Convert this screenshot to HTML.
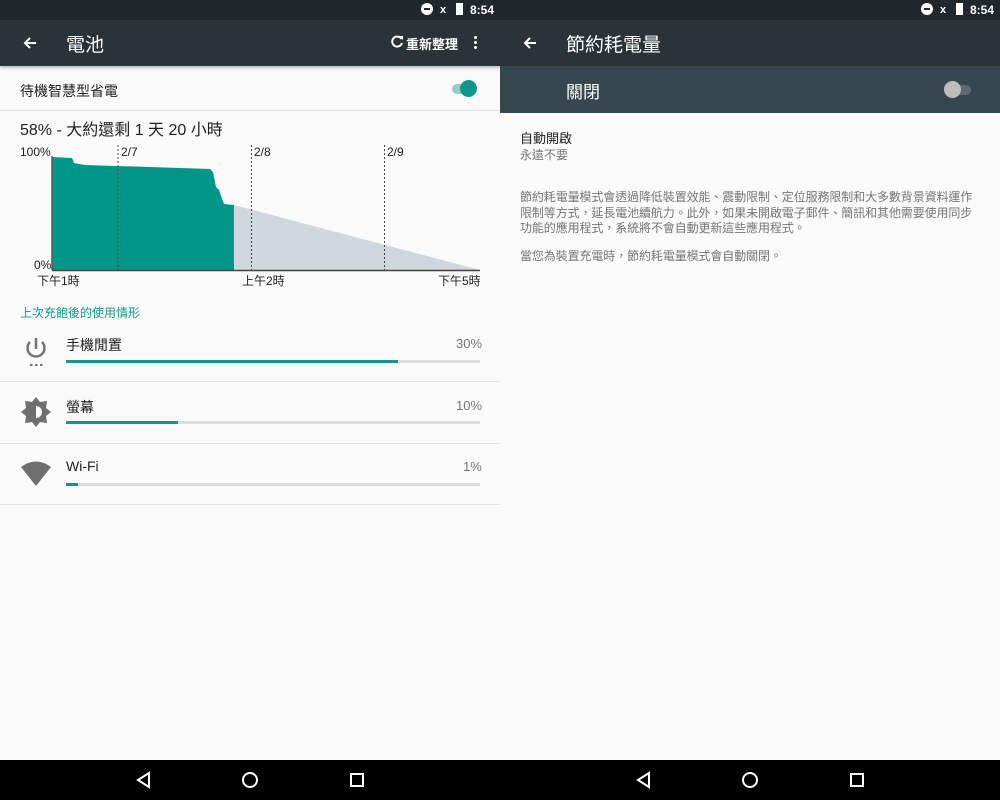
<!DOCTYPE html>
<html><head><meta charset="utf-8"><style>
*{margin:0;padding:0;box-sizing:border-box}
body{width:1000px;height:800px;background:#fafafa;font-family:"Liberation Sans","Noto Sans CJK TC",sans-serif;position:relative;overflow:hidden;color:#212121}
.a{position:absolute;white-space:nowrap}
.sb{top:0;height:20px;background:#21272b}
.tb{top:20px;height:46px;background:#2b3339}
.div{height:1px;background:#e3e3e3;position:absolute}
.bar{position:absolute;height:3px;background:#ddd}
.bar i{display:block;height:3px;background:#159688}
</style></head><body>
<div class="a sb" style="left:0;width:1000px"></div>
<div class="a tb" style="left:0;width:1000px;box-shadow:0 2px 3px rgba(0,0,0,.25)"></div>
<div class="a" style="left:0;top:0;width:1000px;height:20px;color:#fff;font-size:12px;font-weight:bold">
 <span class="a" style="left:421px;top:3px;width:12px;height:12px;border-radius:50%;background:#fff"></span><span class="a" style="left:424px;top:8px;width:6px;height:2px;background:#21272b"></span>
 <span class="a" style="left:440px;top:4px;font-size:11px">x</span>
 <span class="a" style="left:456px;top:3px;width:7px;height:12px;background:#fff"></span>
 <span class="a" style="left:470px;top:3px">8:54</span>
 <span class="a" style="left:921px;top:3px;width:12px;height:12px;border-radius:50%;background:#fff"></span><span class="a" style="left:924px;top:8px;width:6px;height:2px;background:#21272b"></span>
 <span class="a" style="left:940px;top:4px;font-size:11px">x</span>
 <span class="a" style="left:956px;top:3px;width:7px;height:12px;background:#fff"></span>
 <span class="a" style="left:970px;top:3px">8:54</span>
</div>
<svg class="a" style="left:22px;top:35px" width="16" height="16" viewBox="0 0 16 16"><path d="M14 8H3M8 3L3 8l5 5" stroke="#fff" stroke-width="2" fill="none"/></svg>
<div class="a" style="left:66px;top:30px;color:#fff;font-size:19px">電池</div>
<svg class="a" style="left:390px;top:35px" width="14" height="14" viewBox="0 0 14 14"><path d="M11.5 4A5 5 0 1 0 12 8" stroke="#fff" stroke-width="2" fill="none"/><path d="M9 1h4v4z" fill="#fff"/></svg>
<div class="a" style="left:406px;top:34px;color:#fff;font-size:13px;font-weight:bold">重新整理</div>
<div class="a" style="left:474px;top:36px;width:3px;height:3px;background:#fff;box-shadow:0 5px #fff,0 10px #fff;border-radius:50%"></div>
<svg class="a" style="left:522px;top:35px" width="16" height="16" viewBox="0 0 16 16"><path d="M14 8H3M8 3L3 8l5 5" stroke="#fff" stroke-width="2" fill="none"/></svg>
<div class="a" style="left:566px;top:30px;color:#fff;font-size:19px">節約耗電量</div>
<div class="a" style="left:500px;top:66px;width:500px;height:47px;background:#37474f"></div>
<div class="a" style="left:566px;top:78px;color:#fff;font-size:17px">關閉</div>
<div class="a" style="left:947px;top:85px;width:24px;height:10px;border-radius:5px;background:#5d6a71"></div>
<div class="a" style="left:944px;top:81px;width:17px;height:17px;border-radius:50%;background:#bdbdbd"></div>
<div class="a" style="left:520px;top:128px;font-size:13px;color:#212121">自動開啟</div>
<div class="a" style="left:520px;top:146px;font-size:12px;color:#757575">永遠不要</div>
<div class="a" style="left:520px;top:190px;font-size:12px;line-height:15.5px;color:#757575;letter-spacing:-0.1px">節約耗電量模式會透過降低裝置效能、震動限制、定位服務限制和大多數背景資料運作<br>限制等方式，延長電池續航力。此外，如果未開啟電子郵件、簡訊和其他需要使用同步<br>功能的應用程式，系統將不會自動更新這些應用程式。</div>
<div class="a" style="left:520px;top:247px;font-size:12px;color:#757575;letter-spacing:-0.1px">當您為裝置充電時，節約耗電量模式會自動關閉。</div>
<div class="a" style="left:20px;top:81px;font-size:14px">待機智慧型省電</div>
<div class="a" style="left:452px;top:84px;width:24px;height:10px;border-radius:5px;background:#8fcfc7"></div>
<div class="a" style="left:460px;top:80px;width:17px;height:17px;border-radius:50%;background:#109688"></div>
<div class="div" style="left:0;top:110px;width:500px"></div>
<div class="a" style="left:20px;top:116px;font-size:16px">58% - 大約還剩 1 天 20 小時</div>
<svg class="a" style="left:0;top:140px" width="500" height="150">
 <polygon points="234,65 480,130 234,130" fill="#cfd8dc"/>
 <polygon points="52,17 72,18 74,23 85,25 150,27 210,29 213,32 216,47 219,50 224,64 234,65 234,130 52,130" fill="#009688"/>
 <line x1="52" y1="16" x2="52" y2="130" stroke="#555" stroke-width="1.5"/>
 <line x1="52" y1="130.5" x2="480" y2="130.5" stroke="#444" stroke-width="1.5"/>
 <g stroke="#444" stroke-dasharray="2,2"><line x1="118" y1="5" x2="118" y2="130"/><line x1="251.5" y1="5" x2="251.5" y2="130"/><line x1="384.5" y1="5" x2="384.5" y2="130"/></g>
 <g font-size="12" fill="#212121" font-family="Liberation Sans,Noto Sans CJK TC,sans-serif">
 <text x="20" y="16">100%</text><text x="34" y="129">0%</text>
 <text x="121" y="16">2/7</text><text x="254" y="16">2/8</text><text x="387" y="16">2/9</text>
 <text x="37" y="145">下午1時</text><text x="242" y="145">上午2時</text><text x="438" y="145">下午5時</text></g>
</svg>
<div class="a" style="left:20px;top:304px;font-size:12px;color:#159688">上次充飽後的使用情形</div>
<svg class="a" style="left:22px;top:336px" width="28" height="32" viewBox="0 0 28 32"><path d="M14 2v11" stroke="#757575" stroke-width="2.5"/><path d="M8 6a8.5 8.5 0 1 0 12 0" stroke="#757575" stroke-width="2.5" fill="none"/><g fill="#757575"><rect x="8" y="28" width="2.5" height="2"/><rect x="13" y="28" width="2.5" height="2"/><rect x="18" y="28" width="2.5" height="2"/></g></svg>
<div class="a" style="left:66px;top:335px;font-size:14px">手機閒置</div>
<div class="a" style="left:456px;top:336px;font-size:13px;color:#757575">30%</div>
<div class="bar" style="left:66px;top:360px;width:414px"><i style="width:332px"></i></div>
<div class="div" style="left:0;top:381px;width:500px"></div>
<svg class="a" style="left:20px;top:396px" width="32" height="32" viewBox="0 0 32 32"><polygon points="16,1 20,6 27,5 26,12 31,16 26,20 27,27 20,26 16,31 12,26 5,27 6,20 1,16 6,12 5,5 12,6" fill="#6f6f6f"/><path d="M16 10a6 6 0 0 1 0 12z" fill="#fafafa"/></svg>
<div class="a" style="left:66px;top:397px;font-size:14px">螢幕</div>
<div class="a" style="left:456px;top:398px;font-size:13px;color:#757575">10%</div>
<div class="bar" style="left:66px;top:421px;width:414px"><i style="width:112px"></i></div>
<div class="div" style="left:0;top:443px;width:500px"></div>
<svg class="a" style="left:20px;top:459px" width="32" height="28" viewBox="0 0 32 28"><path d="M16 27L1 8Q16-3 31 8z" fill="#6f6f6f"/></svg>
<div class="a" style="left:66px;top:458px;font-size:14px">Wi-Fi</div>
<div class="a" style="left:463px;top:459px;font-size:13px;color:#757575">1%</div>
<div class="bar" style="left:66px;top:483px;width:414px"><i style="width:12px"></i></div>
<div class="div" style="left:0;top:504px;width:500px"></div>
<div class="a" style="left:0;top:760px;width:1000px;height:40px;background:#000"></div>
<svg class="a" style="left:0;top:760px" width="1000" height="40"><g stroke="#fff" stroke-width="2" fill="none">
<polygon points="149,13 149,27 138,20"/><circle cx="250" cy="20" r="7"/><rect x="351" y="14" width="12" height="12"/>
<polygon points="649,13 649,27 638,20"/><circle cx="750" cy="20" r="7"/><rect x="851" y="14" width="12" height="12"/></g></svg>
</body></html>
